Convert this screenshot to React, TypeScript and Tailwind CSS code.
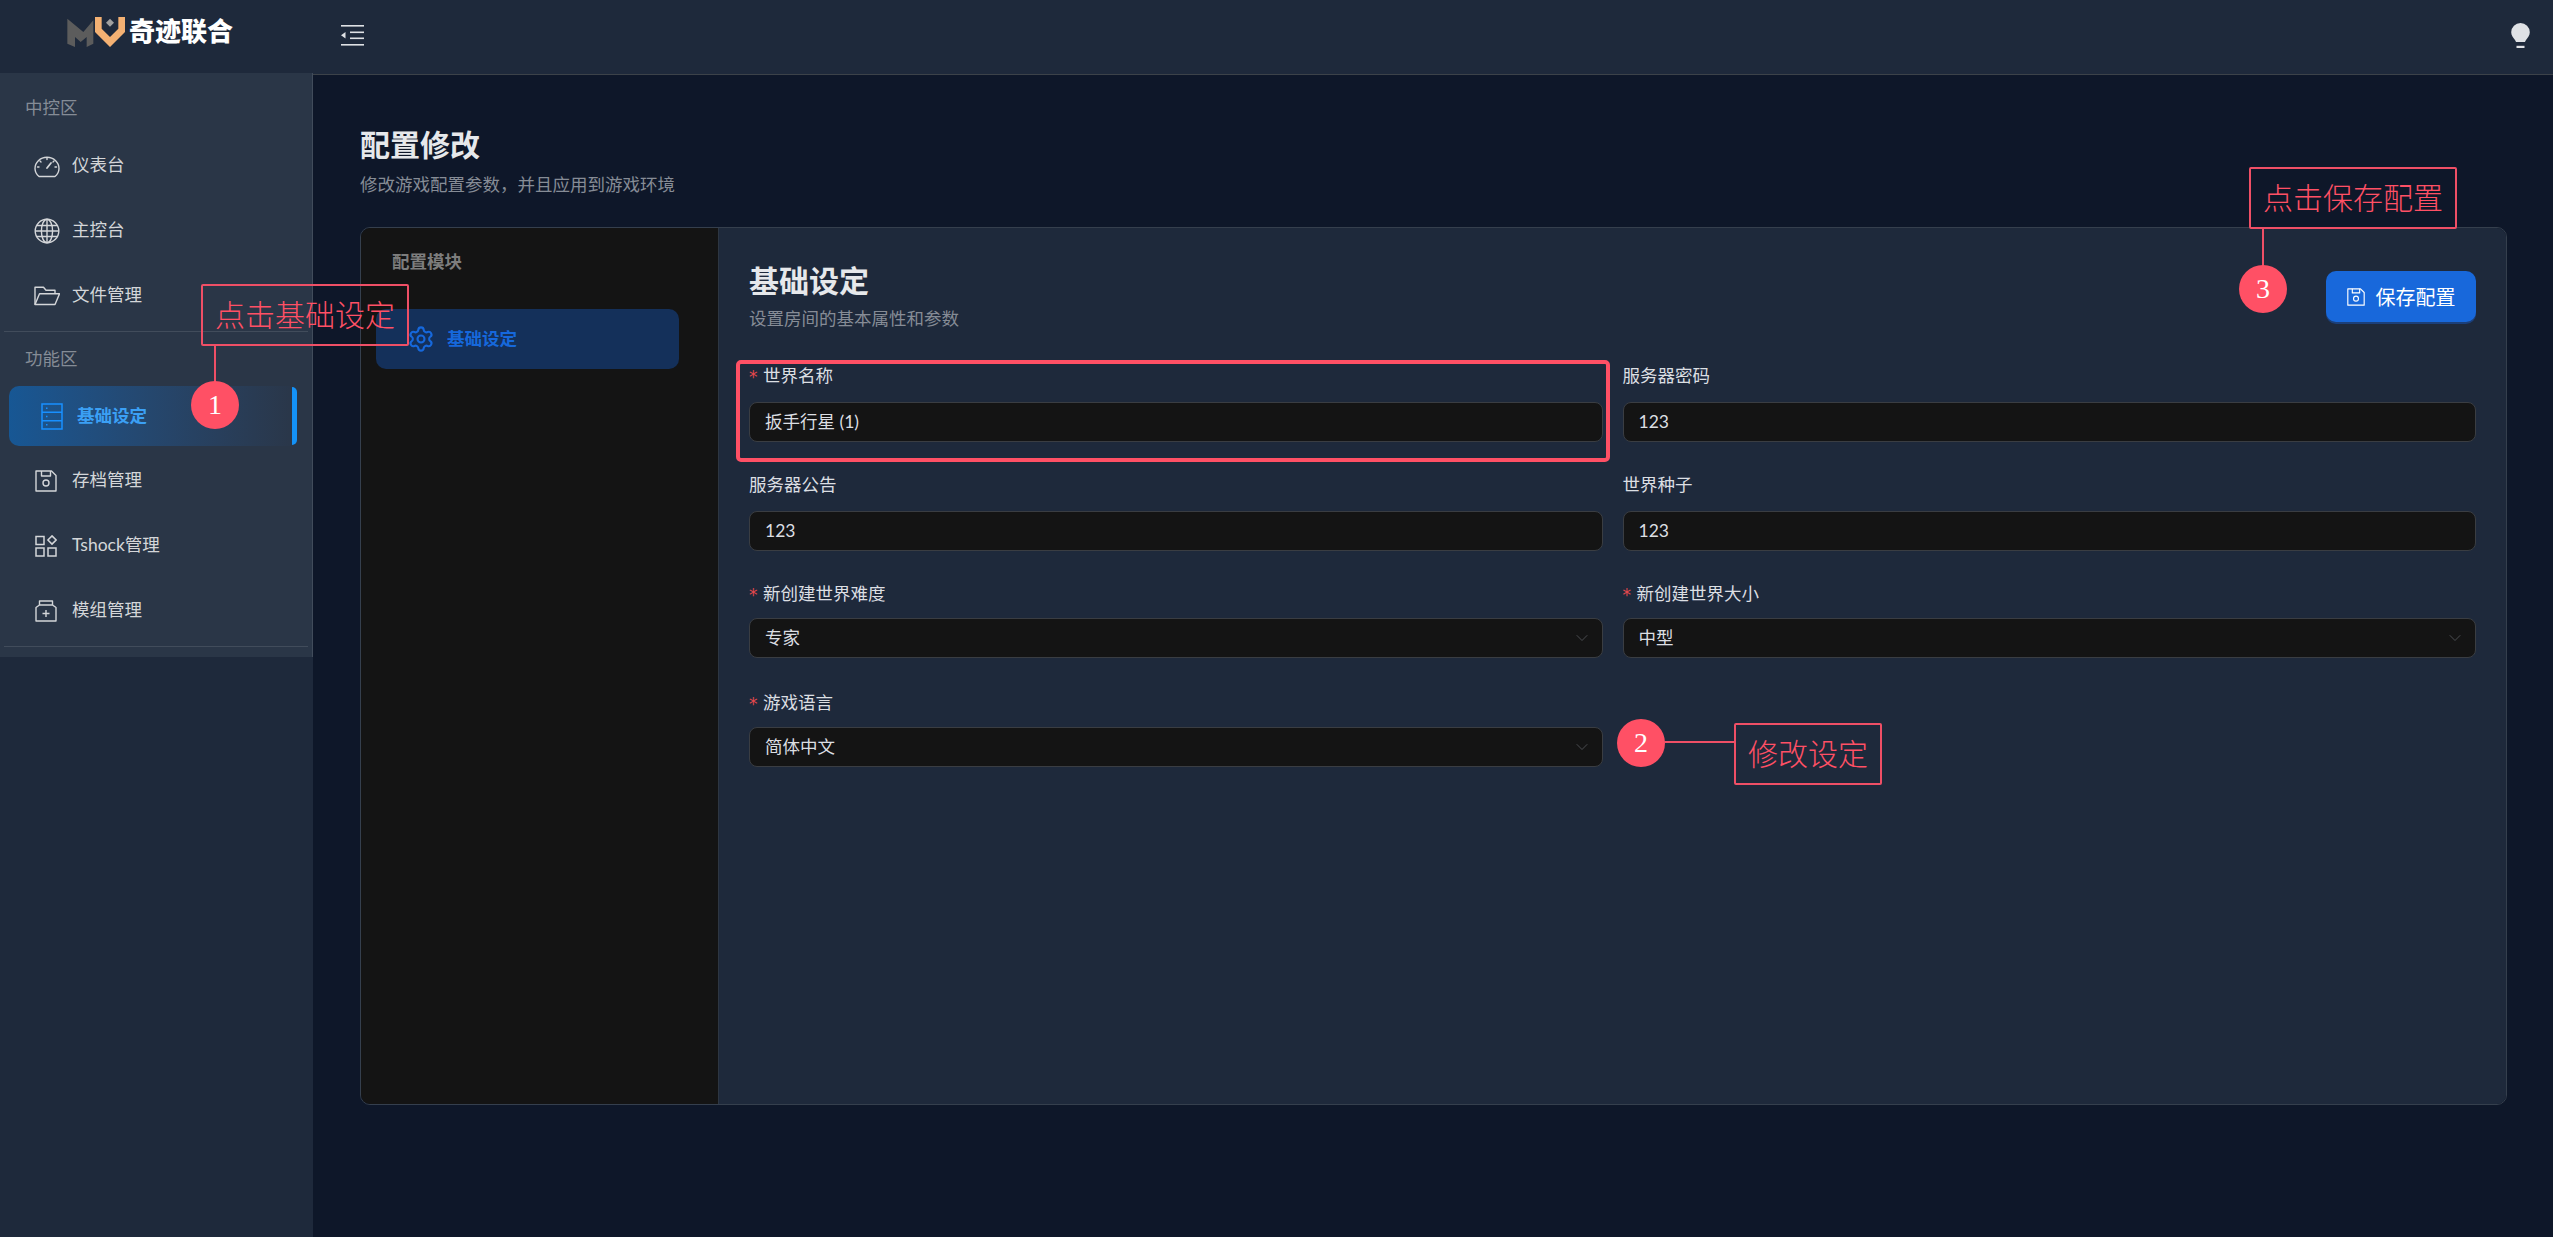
import React from 'react';
import { ChevronDown, Settings } from 'lucide-react';

const FONT = "font-['Lato','Noto_Sans_CJK_SC',sans-serif]";

type IconProps = { className?: string };

function GaugeIcon({ className }: IconProps) {
    return (
        <svg viewBox="0 0 26 24" fill="none" stroke="currentColor" strokeWidth="1.4" className={className}>
            <path d="M5 22.5A12 11 0 1 1 21 22.5Z" strokeLinejoin="round" />
            <path d="M13 14l4-5" strokeWidth="1.8" strokeLinecap="round" />
            <path d="M13 4v1.5M6 7l1 1M20 7l-1 1M3.5 13H5M21 13h1.5" strokeLinecap="round" />
        </svg>
    );
}

function GlobeIcon({ className }: IconProps) {
    return (
        <svg viewBox="0 0 26 26" fill="none" stroke="currentColor" strokeWidth="1.4" className={className}>
            <circle cx="13" cy="13" r="11.8" />
            <ellipse cx="13" cy="13" rx="5.6" ry="11.8" />
            <path d="M13 1v24M1.2 13h23.6M3 7.5h20M3 18.5h20" />
        </svg>
    );
}

function FolderIcon({ className }: IconProps) {
    return (
        <svg viewBox="0 0 26 20" fill="none" stroke="currentColor" strokeWidth="1.4" strokeLinejoin="round" className={className}>
            <path d="M1 18.5V1.2h8.5l2.5 3h9v3.6" />
            <path d="M1 18.5l4.5-10.700h20L21 18.500Z" />
        </svg>
    );
}

function ServerIcon({ className }: IconProps) {
    return (
        <svg viewBox="0 0 22 27" fill="none" stroke="currentColor" strokeWidth="1.5" className={className}>
            <rect x="1" y="1" width="20" height="25" />
            <path d="M1 9.300h20M1 17.700h20" />
            <path d="M5 5.200h1.500M5 13.500h1.500M5 21.800h1.500" />
        </svg>
    );
}

function SaveIcon({ className }: IconProps) {
    return (
        <svg viewBox="0 0 22 22" fill="none" stroke="currentColor" strokeWidth="1.4" strokeLinejoin="round" className={className}>
            <path d="M1 1h15.500L21 5.500V21H1Z" />
            <path d="M6.500 1v5h9V1" />
            <circle cx="11" cy="13" r="3" />
        </svg>
    );
}

function AppsIcon({ className }: IconProps) {
    return (
        <svg viewBox="0 0 22 22" fill="none" stroke="currentColor" strokeWidth="1.5" className={className}>
            <rect x="1" y="1.500" width="8" height="8" />
            <rect x="1" y="13" width="8" height="8" />
            <rect x="13" y="13" width="8" height="8" />
            <path d="M17 .9l4.100 4.100L17 9.100 12.900 5Z" />
        </svg>
    );
}

function ModIcon({ className }: IconProps) {
    return (
        <svg viewBox="0 0 22 22" fill="none" stroke="currentColor" strokeWidth="1.4" strokeLinejoin="round" className={className}>
            <path d="M1 21V7.500L4.500 5h13L21 7.500V21Z" />
            <path d="M4.500 5V1h13v4" />
            <path d="M11 10v7M7.500 13.500h7" />
        </svg>
    );
}

function MenuFoldIcon({ className }: IconProps) {
    return (
        <svg viewBox="0 0 23 21" fill="currentColor" className={className}>
            <rect x="0" y="0" width="23" height="1.600" />
            <rect x="9" y="6.500" width="14" height="1.600" />
            <rect x="9" y="12.500" width="14" height="1.600" />
            <rect x="0" y="19" width="23" height="1.600" />
            <path d="M0 10.300l4.500-3.300v6.600Z" />
        </svg>
    );
}

function BulbIcon({ className }: IconProps) {
    return (
        <svg viewBox="0 0 19 25" fill="currentColor" className={className}>
            <path d="M9.500 0A9.300 9.300 0 0 0 .2 9.300c0 3.500 2.100 5.500 3.800 7.600.6.800.9 1.500 1 2.100h9c.1-.6.400-1.300 1-2.100 1.700-2.100 3.800-4.100 3.800-7.600A9.300 9.300 0 0 0 9.500 0Z" />
            <rect x="5.500" y="22.800" width="8" height="2.200" />
        </svg>
    );
}

function Logo() {
    return (
        <svg viewBox="0 0 210 120" className="h-[40px] w-[70px] shrink-0">
            <path d="M22 20L70 60 100 25V95L80 105V75L62 90 45 75V105L22 95Z" fill="#5c5c5c" />
            <path d="M105 15H125V50L150 75 175 50V15H195V60L150 105 105 60Z" fill="#f4b173" />
            <path d="M150 20L162 32 150 44 138 32Z" fill="#a0a0a0" />
        </svg>
    );
}

function NavItem({ icon, label, active }: { icon: React.ReactNode; label: string; active?: boolean }) {
    if (active) {
        return (
            <div className="relative mx-[9px] flex h-[60px] w-[288px] items-center rounded-l-[10px] rounded-r-[5px] bg-gradient-to-r from-[#175794] to-[#2a3648] pl-[32px] text-[17.5px] font-bold text-[#3ba0f5]">
                <span className="flex w-[36px] text-[#1890ff]">{icon}</span>
                {label}
                <span className="absolute right-0 top-[1px] h-[58px] w-[5px] rounded-r-[5px] bg-[#1492f7]" />
            </div>
        );
    }
    return (
        <div className="flex h-[65px] items-center pl-[34px] text-[17.5px] text-[#d4d6d9]">
            <span className="flex w-[38px]">{icon}</span>
            {label}
        </div>
    );
}

function Field({ label, value, required, select }: { label: string; value: string; required?: boolean; select?: boolean }) {
    return (
        <div className="h-[89px]">
            <div className="flex h-[28px] items-center text-[17.5px] text-[#dcdfe3]">
                {required && <span className="w-[14px] pt-[4px] font-['DejaVu_Sans',sans-serif] text-[17px] text-[#e5484d]">*</span>}
                {label}
            </div>
            <div className={`flex h-[40px] items-center justify-between rounded-[8px] border border-[#3a3d42] bg-[#141414] pl-[15px] pr-[10px] text-[17.5px] text-[#dcdfe3] ${select ? 'mt-[10px]' : 'mt-[12px]'}`}>
                <span>{value}</span>
                {select && <ChevronDown size={20} strokeWidth={1} className="text-[#55585d]" />}
            </div>
        </div>
    );
}

function Callout({ className, text }: { className: string; text: string }) {
    return (
        <div className={`absolute flex h-[62px] items-center justify-center rounded-[2px] border-2 border-[#ef4f66] pb-[2px] text-[30px] font-light text-[#ff5065] ${className}`}>
            {text}
        </div>
    );
}

function Badge({ className, n }: { className: string; n: number }) {
    return (
        <div className={`absolute flex h-[48px] w-[48px] items-center justify-center rounded-full bg-[#ff5065] font-['Liberation_Serif',serif] text-[28px] text-white ${className}`}>
            {n}
        </div>
    );
}

export default function App() {
    return (
        <div className={`relative flex h-[1237px] w-[2553px] overflow-hidden bg-[#0e1729] ${FONT}`}>
            <aside className="flex w-[313px] shrink-0 flex-col bg-[#1e293b]">
                <div className="flex h-[73px] items-center pb-[10px] pl-[60px]">
                    <Logo />
                    <span className="-ml-[1px] text-[26px] font-black text-white">奇迹联合</span>
                </div>
                <nav className="h-[584px] border-r border-[#414c5b] bg-[#2a3647]">
                    <div className="flex h-[43px] items-end pl-[25px] text-[17.5px] leading-none text-[#858c96]">中控区</div>
                    <div className="mt-[17px]">
                        <NavItem icon={<GaugeIcon className="h-[24px] w-[26px]" />} label="仪表台" />
                        <NavItem icon={<GlobeIcon className="h-[26px] w-[26px]" />} label="主控台" />
                        <NavItem icon={<FolderIcon className="h-[20px] w-[26px]" />} label="文件管理" />
                    </div>
                    <div className="mx-[4px] mt-[3px] border-t border-[#414c5b]" />
                    <div className="flex h-[54px] items-center pl-[25px] text-[17.5px] text-[#858c96]">功能区</div>
                    <NavItem active icon={<ServerIcon className="h-[27px] w-[22px]" />} label="基础设定" />
                    <div className="mt-[2px]">
                        <NavItem icon={<SaveIcon className="ml-[1px] h-[22px] w-[22px]" />} label="存档管理" />
                        <NavItem icon={<AppsIcon className="ml-[1px] h-[22px] w-[22px]" />} label="Tshock管理" />
                        <NavItem icon={<ModIcon className="ml-[1px] h-[22px] w-[22px]" />} label="模组管理" />
                    </div>
                    <div className="mx-[4px] mt-[3px] border-t border-[#414c5b]" />
                </nav>
            </aside>

            <div className="flex min-w-0 flex-1 flex-col">
                <header className="flex h-[75px] shrink-0 items-center justify-between border-b border-[#3c4249] bg-[#1e293b] pb-[3px] pl-[28px] pr-[23px] text-[#dfe1e5]">
                    <MenuFoldIcon className="h-[21px] w-[23px]" />
                    <BulbIcon className="h-[25px] w-[19px]" />
                </header>
                <main className="flex-1 pl-[47px] pr-[46px] pt-[49px]">
                    <h1 className="text-[30px] font-bold leading-[40px] text-[#e6e8eb]">配置修改</h1>
                    <p className="mt-[8px] text-[17.5px] leading-[26px] text-[#868c96]">修改游戏配置参数，并且应用到游戏环境</p>
                    <section className="mt-[29px] flex h-[878px] overflow-hidden rounded-[10px] border border-[#353f4d]">
                        <div className="w-[358px] shrink-0 border-r border-[#2d3642] bg-[#141414] px-[15px] pt-[20px]">
                            <div className="pl-[16px] text-[17.5px] font-bold leading-[28px] text-[#7d7d7d]">配置模块</div>
                            <div className="mt-[33px] flex h-[60px] w-[303px] items-center rounded-[10px] bg-[#14305a] pl-[31px] text-[17.5px] font-bold text-[#1668dc]">
                                <Settings size={28} strokeWidth={1.8} />
                                <span className="ml-[12px]">基础设定</span>
                            </div>
                        </div>
                        <div className="flex-1 bg-[#1e293b] px-[30px] pt-[30px]">
                            <div className="flex items-start justify-between">
                                <div>
                                    <h2 className="text-[30px] font-bold leading-[44px] text-[#e6e8eb]">基础设定</h2>
                                    <p className="mt-[3px] text-[17.5px] leading-[28px] text-[#868c96]">设置房间的基本属性和参数</p>
                                </div>
                                <button className="mt-[13px] flex h-[51px] w-[150px] items-center justify-center gap-[11px] rounded-[10px] bg-[#1868db] text-[20px] text-white shadow-[0_2px_0_#1b3f7a]">
                                    <SaveIcon className="h-[18px] w-[18px]" />
                                    保存配置
                                </button>
                            </div>
                            <div className="mt-[29px] grid grid-cols-2 gap-x-[20px] gap-y-[20px]">
                                <Field required label="世界名称" value="扳手行星 (1)" />
                                <Field label="服务器密码" value="123" />
                                <Field label="服务器公告" value="123" />
                                <Field label="世界种子" value="123" />
                                <Field required select label="新创建世界难度" value="专家" />
                                <Field required select label="新创建世界大小" value="中型" />
                                <Field required select label="游戏语言" value="简体中文" />
                            </div>
                        </div>
                    </section>
                </main>
            </div>

            {/* annotations drawn over the page */}
            <div className="absolute left-[736px] top-[360px] h-[102px] w-[874px] rounded-[5px] border-4 border-[#ff5065]" />

            <Callout className="left-[201px] top-[284px] w-[208px]" text="点击基础设定" />
            <div className="absolute left-[214px] top-[345px] h-[38px] w-[2px] bg-[#ef4f66]" />
            <Badge className="left-[191px] top-[381px]" n={1} />

            <Callout className="left-[2249px] top-[167px] w-[208px]" text="点击保存配置" />
            <div className="absolute left-[2262px] top-[228px] h-[38px] w-[2px] bg-[#ef4f66]" />
            <Badge className="left-[2239px] top-[265px]" n={3} />

            <Badge className="left-[1617px] top-[719px]" n={2} />
            <div className="absolute left-[1664px] top-[741px] h-[2px] w-[70px] bg-[#ef4f66]" />
            <Callout className="left-[1734px] top-[723px] w-[148px]" text="修改设定" />
        </div>
    );
}
